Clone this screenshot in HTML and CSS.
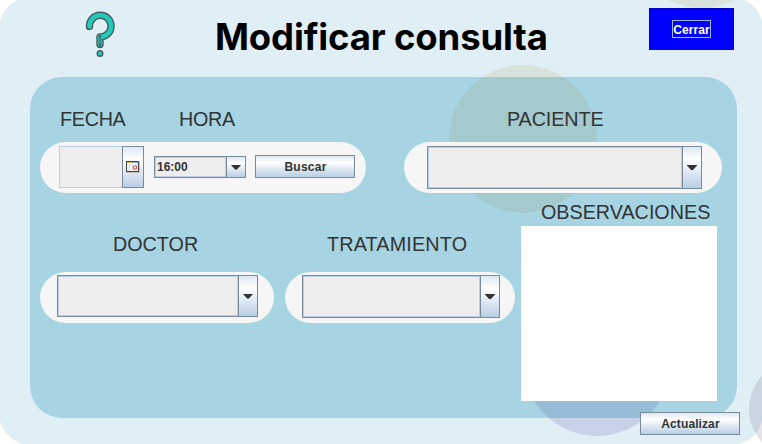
FILE: index.html
```html
<!DOCTYPE html>
<html lang="es">
<head>
<meta charset="utf-8">
<title>Modificar consulta</title>
<link rel="stylesheet" href="styles.css">
</head>
<body>
<main class="window">
  <div class="backdrop"></div>
  <header class="header">
    <svg class="help" viewBox="0 0 30 48" width="30" height="48" fill="none" stroke-linecap="round" stroke-linejoin="round">
      <path d="M4.5 15.5 A10.8 10.8 0 1 1 15 25.9 V33.5" stroke="#4d5960" stroke-width="7.4"/>
      <path d="M4.5 15.5 A10.8 10.8 0 1 1 15 25.9 V33.5" stroke="#20cbbb" stroke-width="4.6"/>
      <path d="M15 25 V34" stroke="#4d5960" stroke-width="2.4"/>
      <path d="M15 26.5 V33" stroke="#20cbbb" stroke-width=".8"/>
      <circle cx="15" cy="42.5" r="2.8" fill="#20cbbb" stroke="#4d5960" stroke-width="1.4"/>
    </svg>
    <h1 class="title">Modificar consulta</h1>
    <button class="close"><span class="close-label">Cerrar</span></button>
  </header>

  <section class="panel"></section>
  <div class="circle circle-sand-top"></div>
  <div class="circle circle-sand"></div>
  <div class="circle circle-violet"></div>
  <div class="circle circle-corner"></div>

  <form class="form">
    <div class="row row-top">
      <div class="schedule">
        <div class="schedule-labels">
          <span class="label fecha">FECHA</span>
          <span class="label hora">HORA</span>
        </div>
        <div class="pill">
          <div class="date">
            <div class="date-value"></div>
            <div class="date-button">
              <svg width="14" height="12" viewBox="0 0 14 12">
                <path d="M1 11.5H13.5V1" fill="none" stroke="#c5c0b5"/>
                <rect x=".5" y=".5" width="12" height="10" fill="#f4f4f4" stroke="#444"/>
                <path d="M1 1.5H6" stroke="#e8b04c"/>
                <path d="M6 1.5H12" stroke="#8fb4d8"/>
                <path d="M3.5 3V10M6.5 3V10" stroke="#ddd"/>
                <circle cx="9" cy="6.5" r="1.7" fill="#fff" stroke="#e04a4a" stroke-width="1.1"/>
              </svg>
            </div>
          </div>
          <div class="combo combo-time"><div class="combo-value">16:00</div><div class="combo-arrow"></div></div>
          <button class="button search" type="button">Buscar</button>
        </div>
      </div>
      <div class="patient">
        <span class="label paciente">PACIENTE</span>
        <div class="pill"><div class="combo combo-patient"><div class="combo-value"></div><div class="combo-arrow"></div></div></div>
      </div>
    </div>
    <div class="row">
      <div class="doctor">
        <span class="label medico">DOCTOR</span>
        <div class="pill"><div class="combo combo-doctor"><div class="combo-value"></div><div class="combo-arrow"></div></div></div>
      </div>
      <div class="treatment">
        <span class="label tratamiento">TRATAMIENTO</span>
        <div class="pill"><div class="combo combo-treatment"><div class="combo-value"></div><div class="combo-arrow"></div></div></div>
      </div>
      <div class="notes">
        <span class="label observaciones">OBSERVACIONES</span>
        <div class="notes-area"></div>
      </div>
    </div>
    <button class="button update" type="button">Actualizar</button>
  </form>
</main>
</body>
</html>
```
FILE: styles.css
```css
* { box-sizing: border-box; }
body { margin: 0; background: #fff; font-family: "Liberation Sans", Arial, sans-serif; }
.window { position: relative; width: 762px; height: 444px; overflow: hidden; isolation: isolate; }
.backdrop { position: absolute; z-index: -4; inset: -3px -1px -1px -1px; border-radius: 32px; background: #e0eff5; }

.header { display: flex; align-items: flex-start; height: 77px; }
.help { margin: 11px 0 0 85px; }
.title { margin: 14px 0 0 100px; width: 339px; font: 700 36.5px/46px Inter, sans-serif; letter-spacing: -0.15px; color: #000; white-space: nowrap; }
.close { width: 85px; height: 42px; margin: 8px 0 0 95px; padding: 0; border: 0; background: #00f; box-shadow: inset 1px 1px #0000c4, inset -2px -2px #00f, inset -3px -3px #0000c4; color: #fff; font: bold 12px/18px "Liberation Sans", Arial, sans-serif; }
.close-label { display: block; width: 39px; height: 18px; margin: 0 auto; border: 1px solid #a3b8cc; white-space: nowrap; letter-spacing: .1px; }

.panel { position: absolute; z-index: -3; inset: 77px 25px 26px 30px; border-radius: 32px; background: #a6d4e3; }
.circle { position: absolute; z-index: -2; width: 148px; height: 148px; border-radius: 50%; }
.circle-sand { left: 449px; top: 65px; background: rgba(152, 140, 62, .13); }
.circle-sand-top { left: 628px; top: -140px; background: rgba(152, 140, 62, .13); }
.circle-violet { left: 523px; top: 288px; background: rgba(75, 65, 155, .16); }
.circle-corner { left: 749px; top: 360px; width: 98px; height: 98px; background: rgba(95, 75, 125, .16); }

.form { padding: 30px 0 0 40px; }
.row { display: flex; align-items: flex-start; }
.row-top { gap: 38px; height: 94px; }
.label { display: block; width: max-content; height: 24px; font-size: 21px; line-height: 24px; color: #333; white-space: nowrap; transform: scaleX(.94); transform-origin: left; }
.pill { display: flex; height: 51px; margin-top: 11px; border-radius: 26px; background: #f6f6f6; }
.schedule { width: 326px; }
.schedule-labels { display: grid; grid-template-columns: 119px 1fr; padding-left: 20px; }
.fecha { letter-spacing: -.3px; }
.hora { letter-spacing: -.3px; }
.patient { width: 318px; }
.paciente { margin-left: 103px; letter-spacing: -.1px; }
.doctor { width: 234px; margin-top: 31px; }
.medico { margin-left: 73px; }
.treatment { width: 230px; margin: 31px 0 0 11px; }
.tratamiento { margin-left: 42px; letter-spacing: .2px; }
.doctor .pill, .treatment .pill { margin-top: 16px; }
.notes { width: 196px; margin-left: 6px; }
.observaciones { margin-left: 20px; height: 25px; margin-top: -1px; }
.notes-area { height: 175px; margin-top: 1px; background: #fff; }

.date { display: flex; width: 85px; height: 42px; margin: 4px 0 0 19px; }
.date-value { width: 63px; border: 1px solid #b8cfe5; border-right: 0; background: #eee; }
.date-button { display: flex; align-items: center; justify-content: center; width: 22px; border: 1px solid #7a8a99; }
.date-button, .combo-arrow, .button { background: linear-gradient(#dde8f3 0, #fff 30%, #b8cfe5 100%); }
.combo { display: flex; border: 1px solid #7a8a99; background: #eee; color: #333; }
.combo-value { flex: 1; border: 1px solid #b8cfe5; }
.combo-arrow { display: flex; align-items: center; width: 19px; padding-left: 4px; border-left: 1px solid #7a8a99; }
.combo-arrow::before { content: ""; width: 10px; height: 5px; background: #333; clip-path: polygon(0 0, 100% 0, 100% 10%, 60% 100%, 40% 100%, 0 10%); }
.combo-time { width: 92px; height: 22px; margin: 14px 0 0 10px; font: bold 12px/18px "Liberation Sans", Arial, sans-serif; }
.combo-time .combo-value { padding-left: 1px; }
.combo-patient { width: 275px; height: 43px; margin: 4px 0 0 23px; }
.combo-doctor { width: 201px; height: 42px; margin: 3px 0 0 17px; }
.combo-treatment { width: 198px; height: 43px; margin: 3px 0 0 17px; }
.button { width: 100px; height: 23px; padding: 0 0 0 1px; border: 1px solid #7a8a99; color: #333; font: bold 12px/20px "Liberation Sans", Arial, sans-serif; letter-spacing: .1px; }
.search { margin: 13px 0 0 9px; letter-spacing: .25px; }
.update { display: block; margin: 11px 0 0 600px; }
```
